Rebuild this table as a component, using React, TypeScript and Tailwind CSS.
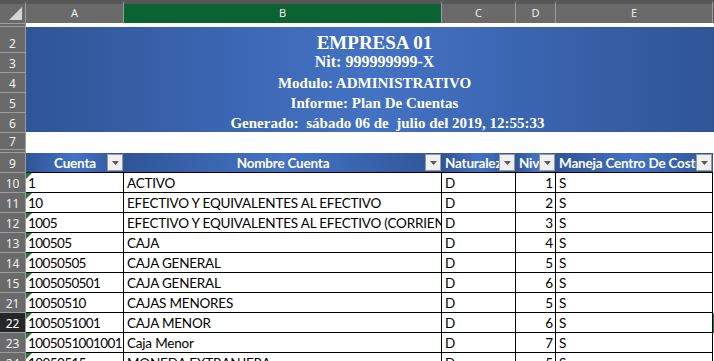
import React from 'react';

type Fila = { n: string; cuenta: string; nombre: string; nat: string; nivel: number; centro: string };

const filas: Fila[] = [
  { n: '10', cuenta: '1', nombre: 'ACTIVO', nat: 'D', nivel: 1, centro: 'S' },
  { n: '11', cuenta: '10', nombre: 'EFECTIVO Y EQUIVALENTES AL EFECTIVO', nat: 'D', nivel: 2, centro: 'S' },
  { n: '12', cuenta: '1005', nombre: 'EFECTIVO Y EQUIVALENTES AL EFECTIVO (CORRIENTE)', nat: 'D', nivel: 3, centro: 'S' },
  { n: '13', cuenta: '100505', nombre: 'CAJA', nat: 'D', nivel: 4, centro: 'S' },
  { n: '14', cuenta: '10050505', nombre: 'CAJA GENERAL', nat: 'D', nivel: 5, centro: 'S' },
  { n: '15', cuenta: '1005050501', nombre: 'CAJA GENERAL', nat: 'D', nivel: 6, centro: 'S' },
  { n: '21', cuenta: '10050510', nombre: 'CAJAS MENORES', nat: 'D', nivel: 5, centro: 'S' },
  { n: '22', cuenta: '1005051001', nombre: 'CAJA MENOR', nat: 'D', nivel: 6, centro: 'S' },
  { n: '23', cuenta: '1005051001001', nombre: 'Caja Menor', nat: 'D', nivel: 7, centro: 'S' },
  { n: '24', cuenta: '10050515', nombre: 'MONEDA EXTRANJERA', nat: 'D', nivel: 5, centro: 'S' },
];

const activa = '22';

function RowHead({ n, h = 'h-[20px]' }: { n: string; h?: string }) {
  const on = n === activa;
  return (
    <div
      className={`flex w-[26px] shrink-0 items-end justify-center border-r border-b border-[#9c9c9c] pb-[2px] font-['Noto_Sans',sans-serif] text-[12px] leading-none ${h} ${
        on ? 'bg-[#262626] text-white' : 'bg-[#6a6a6a] text-[#f2f2f2]'
      }`}
    >
      {n}
    </div>
  );
}

function ColHead({ label, w, on }: { label: string; w: string; on?: boolean }) {
  return (
    <div
      className={`flex h-[23px] shrink-0 items-center justify-center border-t-4 border-t-[#575757] border-r border-r-[#9c9c9c] font-['Noto_Sans',sans-serif] text-[11px] text-[#eeeeee] ${w} ${
        on ? 'bg-[#0b6333]' : 'bg-[#6a6a6a]'
      }`}
    >
      {label}
    </div>
  );
}

function FilterBtn() {
  return (
    <span className="absolute top-[1px] right-[1px] flex h-[17px] w-[16px] items-center justify-center border border-[#9a9a9a] bg-[#f0f0f0]">
      <svg width="7" height="4" viewBox="0 0 7 4">
        <path d="M0 0h7L3.5 4z" fill="#5a5a5a" />
      </svg>
    </span>
  );
}

const grad = 'bg-[linear-gradient(90deg,#2f5597_0%,#4472c4_50%,#2f5597_100%)]';

function HeadCell({ label, w, center }: { label: string; w: string; center?: boolean }) {
  return (
    <div
      className={`relative flex h-[20px] shrink-0 items-end overflow-hidden whitespace-nowrap border-b border-black pb-[1.5px] text-[13.5px] leading-none font-bold tracking-[-0.2px] text-white ${grad} ${w} ${
        center ? 'justify-center' : 'pl-[3px]'
      }`}
    >
      {label}
      <FilterBtn />
    </div>
  );
}

const celda =
  'flex h-[20px] shrink-0 items-end overflow-hidden whitespace-nowrap border-r border-b border-black pb-[1.5px] text-[13.5px] leading-none text-black';

export default function App() {
  return (
    <div className="h-[361px] w-[714px] overflow-hidden bg-white font-['Lato',sans-serif]">
      {/* cabecera de columnas */}
      <div className="flex">
        <div className="relative h-[23px] w-[26px] shrink-0 border-t-4 border-t-[#575757] border-r border-r-[#9c9c9c] bg-[#6a6a6a]">
          <svg className="absolute top-[3px] left-[9px]" width="13" height="13" viewBox="0 0 13 13">
            <path d="M13 0V13H0z" fill="#d6d6d6" />
          </svg>
        </div>
        <ColHead label="A" w="w-[98px]" />
        <ColHead label="B" w="w-[318px]" on />
        <ColHead label="C" w="w-[74px]" />
        <ColHead label="D" w="w-[40px]" />
        <ColHead label="E" w="w-[157px]" />
        <div className="h-[23px] flex-1 border-t-4 border-t-[#575757] bg-[#555555]" />
      </div>

      {/* fila 1 oculta */}
      <div className="flex h-[4px]">
        <div className="w-[26px] shrink-0 border-y border-r border-[#9c9c9c] bg-[#6a6a6a]" />
        <div className="flex-1 bg-white" />
      </div>

      {/* encabezado del informe */}
      <div className="flex">
        <div className="flex w-[26px] shrink-0 flex-col">
          <RowHead n="2" h="h-[26px]" />
          <RowHead n="3" />
          <RowHead n="4" />
          <RowHead n="5" />
          <RowHead n="6" />
        </div>
        <div className={`flex flex-1 flex-col border-b border-white pl-[9px] font-['Liberation_Serif',serif] font-bold text-white ${grad}`}>
          <div className="flex h-[26px] items-end justify-center pb-[1px] text-[19px] leading-none">EMPRESA 01</div>
          <div className="flex h-[20px] items-end justify-center pb-[3px] text-[16px] leading-none">Nit: 999999999-X</div>
          <div className="flex h-[20px] items-end justify-center pb-[2px] text-[15px] leading-none">Modulo: ADMINISTRATIVO</div>
          <div className="flex h-[20px] items-end justify-center pb-[2px] text-[15px] leading-none">Informe: Plan De Cuentas</div>
          <div className="flex h-[19px] items-end justify-center pb-[1px] pl-[26px] text-[15px] leading-none whitespace-pre">
            Generado:  sábado 06 de  julio del 2019, 12:55:33
          </div>
        </div>
      </div>

      {/* fila 7 + fila 8 oculta */}
      <div className="flex h-[20px]">
        <div className="flex w-[26px] shrink-0 items-end justify-center border-r border-b border-[#9c9c9c] bg-[#6a6a6a] pb-[4px] font-['Noto_Sans',sans-serif] text-[12px] leading-none text-[#f2f2f2] shadow-[inset_0_-2px_0_0_#6a6a6a,inset_0_-3px_0_0_#9c9c9c]">
          7
        </div>
        <div className="flex-1 bg-white" />
      </div>

      {/* encabezados de la tabla */}
      <div className="flex">
        <RowHead n="9" />
        <HeadCell label="Cuenta" w="w-[98px]" center />
        <HeadCell label="Nombre Cuenta" w="w-[318px]" center />
        <HeadCell label="Naturaleza" w="w-[74px]" />
        <HeadCell label="Nivel" w="w-[40px]" />
        <HeadCell label="Maneja Centro De Costo" w="w-[157px]" />
        <div className="h-[20px] flex-1 bg-white" />
      </div>

      {filas.map((f) => (
        <div key={f.n} className="flex">
          <RowHead n={f.n} />
          <div className={`${celda} relative w-[98px] pl-[2px] tracking-[-0.6px]`}>
            <svg className="absolute top-0 left-0" width="6" height="6" viewBox="0 0 6 6">
              <path d="M0 0H6L0 6z" fill="#1e7a3c" />
            </svg>
            {f.cuenta}
          </div>
          <div className={`${celda} w-[318px] pl-[3px] tracking-[-0.2px]`}>{f.nombre}</div>
          <div className={`${celda} w-[74px] pl-[3px]`}>{f.nat}</div>
          <div className={`${celda} w-[40px] justify-end pr-[2px]`}>{f.nivel}</div>
          <div className={`${celda} w-[157px] pl-[3px]`}>{f.centro}</div>
          <div className={`h-[20px] flex-1 ${f.n === activa ? 'bg-[#217346]' : 'bg-white'}`} />
        </div>
      ))}
    </div>
  );
}
